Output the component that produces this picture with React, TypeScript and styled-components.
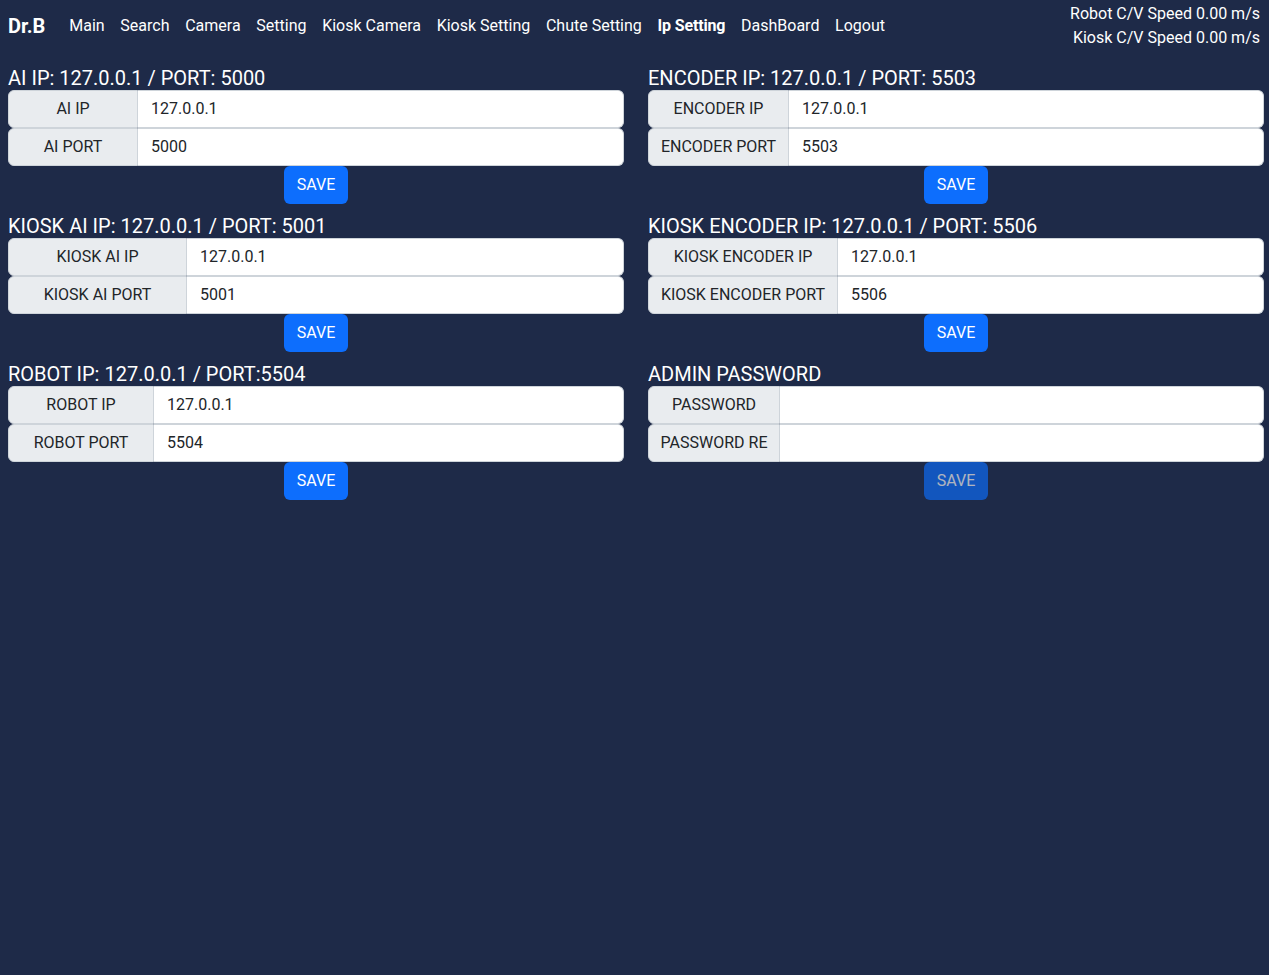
import React from 'react';
import styled, { createGlobalStyle } from 'styled-components';

type Field = {
    label: string;
    value: string;
}

type Section = {
    title: string;
    labelWidth: number;
    fields: Field[];
    disabled?: boolean;
}

const GlobalStyle = createGlobalStyle`
    html, body {
        margin: 0;
        padding: 0;
        background-color: #1e2a48;
        font-family: Roboto, "Liberation Sans", sans-serif;
        color: #ffffff;
    }
    * {
        box-sizing: border-box;
    }
`

const Page = styled.div`
    min-height: 975px;
    background-color: #1e2a48;
`

const NavBar = styled.nav`
    height: 52px;
    display: flex;
    align-items: center;
    padding: 0 9px 0 8px;
`

const Brand = styled.div`
    font-size: 20px;
    font-weight: 700;
    margin-right: 16px;
`

const NavList = styled.div`
    display: flex;
    flex: 1;
`

const NavLink = styled.a<{ active?: boolean }>`
    padding: 0 7.85px;
    font-size: 16px;
    line-height: 24px;
    color: #ffffff;
    text-decoration: none;
    font-weight: ${({ active }) => (active ? 700 : 400)};
    letter-spacing: ${({ active }) => (active ? '-0.15px' : '0')};
`

const SpeedBox = styled.div`
    text-align: right;
    font-size: 16px;
    line-height: 24px;
`

const Grid = styled.div`
    display: grid;
    grid-template-columns: 616px 616px;
    column-gap: 24px;
    padding: 4px 0 0 8px;
`

const Block = styled.div`
    margin-top: 10px;
    display: flex;
    flex-direction: column;
`

const Title = styled.div`
    font-size: 20px;
    font-weight: 400;
    line-height: 24px;
`

const Row = styled.div<{ labelWidth: number }>`
    display: grid;
    grid-template-columns: ${({ labelWidth }) => labelWidth}px 1fr;
    height: 38px;
`

const Label = styled.div`
    background-color: #e9ecef;
    border: 1px solid #ced4da;
    border-radius: 6px 0 0 6px;
    color: #212529;
    font-size: 16px;
    display: flex;
    align-items: center;
    justify-content: center;
    padding-bottom: 2px;
    white-space: nowrap;
`

const Input = styled.input`
    border: 1px solid #ced4da;
    border-left: none;
    border-radius: 0 6px 6px 0;
    background-color: #ffffff;
    color: #212529;
    font-family: Roboto, "Liberation Sans", sans-serif;
    font-size: 16px;
    padding: 0 12px 2px 13px;
    outline: none;
    min-width: 0;
`

const SaveButton = styled.button<{ disabled?: boolean }>`
    align-self: center;
    width: 64px;
    height: 38px;
    border: none;
    border-radius: 6px;
    background-color: #0d6efd;
    color: #ffffff;
    font-family: Roboto, "Liberation Sans", sans-serif;
    font-size: 16px;
    padding: 0 0 2px;
    opacity: ${({ disabled }) => (disabled ? 0.65 : 1)};
`

const sections: Section[] = [
    { title: 'AI IP: 127.0.0.1 / PORT: 5000', labelWidth: 130, fields: [{ label: 'AI IP', value: '127.0.0.1' }, { label: 'AI PORT', value: '5000' }] },
    { title: 'ENCODER IP: 127.0.0.1 / PORT: 5503', labelWidth: 141, fields: [{ label: 'ENCODER IP', value: '127.0.0.1' }, { label: 'ENCODER PORT', value: '5503' }] },
    { title: 'KIOSK AI IP: 127.0.0.1 / PORT: 5001', labelWidth: 179, fields: [{ label: 'KIOSK AI IP', value: '127.0.0.1' }, { label: 'KIOSK AI PORT', value: '5001' }] },
    { title: 'KIOSK ENCODER IP: 127.0.0.1 / PORT: 5506', labelWidth: 190, fields: [{ label: 'KIOSK ENCODER IP', value: '127.0.0.1' }, { label: 'KIOSK ENCODER PORT', value: '5506' }] },
    { title: 'ROBOT IP: 127.0.0.1 / PORT:5504', labelWidth: 146, fields: [{ label: 'ROBOT IP', value: '127.0.0.1' }, { label: 'ROBOT PORT', value: '5504' }] },
    { title: 'ADMIN PASSWORD', labelWidth: 132, fields: [{ label: 'PASSWORD', value: '' }, { label: 'PASSWORD RE', value: '' }], disabled: true },
];

const links = ['Main', 'Search', 'Camera', 'Setting', 'Kiosk Camera', 'Kiosk Setting', 'Chute Setting', 'Ip Setting', 'DashBoard', 'Logout'];

const App: React.FC = () => {
    return (
        <Page>
            <GlobalStyle />
            <NavBar>
                <Brand>Dr.B</Brand>
                <NavList>
                    {links.map((l) => (
                        <NavLink key={l} href="#" active={l === 'Ip Setting'}>{l}</NavLink>
                    ))}
                </NavList>
                <SpeedBox>
                    Robot C/V Speed 0.00 m/s<br />
                    Kiosk C/V Speed 0.00 m/s
                </SpeedBox>
            </NavBar>
            <Grid>
                {sections.map((s) => (
                    <Block key={s.title}>
                        <Title>{s.title}</Title>
                        {s.fields.map((f) => (
                            <Row key={f.label} labelWidth={s.labelWidth}>
                                <Label>{f.label}</Label>
                                <Input defaultValue={f.value} type={s.disabled ? 'password' : 'text'} />
                            </Row>
                        ))}
                        <SaveButton disabled={s.disabled}>SAVE</SaveButton>
                    </Block>
                ))}
            </Grid>
        </Page>
    )
}

export default App;
